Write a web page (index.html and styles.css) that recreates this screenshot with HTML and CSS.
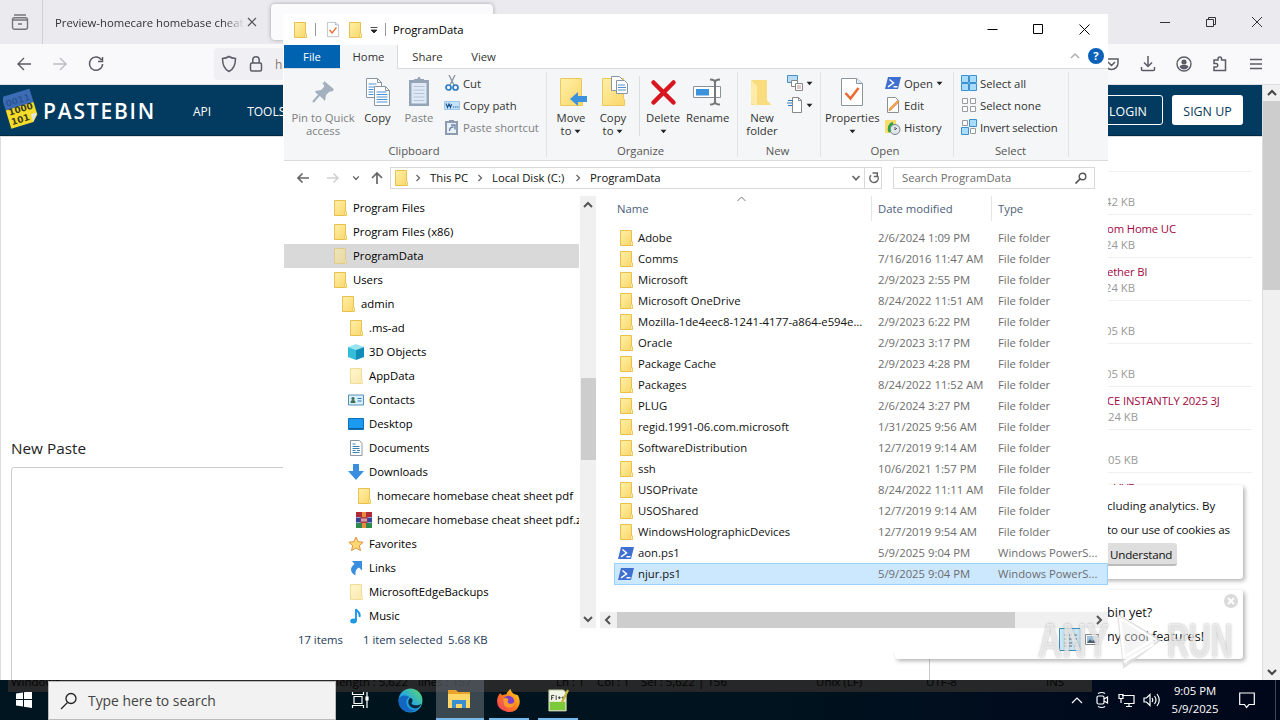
FILE: index.html
```html
<!DOCTYPE html>
<html lang="en">
<head>
    <meta charset="UTF-8">
    <title>ProgramData</title>
    <link rel="stylesheet" href="styles.css">
</head>
<body>
    <!-- shared icons -->
    <svg class="defs" width="0" height="0">
        <linearGradient id="g-folder" x1="0" y1="0" x2="1" y2="1"><stop offset="0" stop-color="#fff0a8"/><stop offset="1" stop-color="#f9d668"/></linearGradient>
        <linearGradient id="g-edge" x1="0" y1="1" x2="1" y2="0"><stop offset="0" stop-color="#0f6fc4"/><stop offset=".45" stop-color="#22a9e6"/><stop offset="1" stop-color="#66d860"/></linearGradient>
        <linearGradient id="g-fox" x1="0" y1="1" x2="1" y2="0"><stop offset="0" stop-color="#f5336b"/><stop offset=".5" stop-color="#ff7a1c"/><stop offset="1" stop-color="#ffe226"/></linearGradient>
        <symbol id="folder" viewBox="0 0 16 16"><path d="M2.500.5h11v11l1 .5v3.500h-12z" fill="url(#g-folder)" stroke="#e8c04e"/><path d="M12.500 15.500v-3l1-1.500 1 1.500v3z" fill="#ffeeb0" stroke="#e8c04e" stroke-width=".7"/></symbol>
        <symbol id="ps" viewBox="0 0 16 16"><path d="M3 2h13l-3 12H0z" fill="#3f6fd1"/><path d="M4.500 4.500l4 3.500-5.500 3.800M8.500 11.800h4" fill="none" stroke="#fff" stroke-width="1.500"/></symbol>
        <symbol id="chev-r" viewBox="0 0 8 8"><path d="M2.500 1l3 3-3 3" fill="none" stroke="#666" stroke-width="1.300"/></symbol>
        <symbol id="chev-d" viewBox="0 0 10 10"><path d="M1.500 3L5 6.800 8.500 3" fill="none" stroke="#666" stroke-width="1.700"/></symbol>
        <symbol id="caret" viewBox="0 0 6 4"><path d="M.5.5h5L3 3.500z" fill="#222"/></symbol>
        <symbol id="check-doc" viewBox="0 0 26 32"><path d="M2.500 2.500h15l6 5v22h-21z" fill="#fff" stroke="#8d959c"/><path d="M17.500 2.500v5h6" fill="#d5eafa" stroke="#8d959c"/><path d="M6.500 17l5 5.500 8-10.500" fill="none" stroke="#ee6a34" stroke-width="2.600"/></symbol>
    </svg>

    <div class="desktop">
        <div class="browser">
            <div class="tabbar">
                <div class="archive"><svg width="18" height="18" viewBox="0 0 18 18" fill="none" stroke="#77767d" stroke-width="1.400"><rect x="1.500" y="4.700" width="15" height="11.600" rx="2"/><path d="M3 2h12M1.500 7h15M7 11h4"/></svg></div>
                <div class="tab">Preview-homecare homebase cheat</div>
                <svg class="tab-x" width="10" height="10" viewBox="0 0 10 10"><path d="M1 1l8 8M9 1L1 9" stroke="#555" stroke-width="1.200"/></svg>
                <div class="tab-active"></div>
                <div class="win-buttons">
                    <svg width="12" height="12" viewBox="0 0 12 12"><path d="M1 6.500h10" stroke="#333"/></svg>
                    <svg width="12" height="12" viewBox="0 0 12 12" fill="none" stroke="#333"><path d="M1.500 3.500h7v7h-7zM3.500 3.500v-2h7v7h-2"/></svg>
                    <svg width="12" height="12" viewBox="0 0 12 12"><path d="M1 1l10 10M11 1L1 11" stroke="#333"/></svg>
                </div>
            </div>
            <div class="toolbar">
                <svg width="16" height="16" viewBox="0 0 16 16" fill="none" stroke="#5b5b66" stroke-width="1.400"><path d="M15 8H1.500M8 2L2 8l6 6"/></svg>
                <svg width="16" height="16" viewBox="0 0 16 16" fill="none" stroke="#bdbcc4" stroke-width="1.400"><path d="M1 8h13.500M8 2l6 6-6 6"/></svg>
                <svg class="reload" width="18" height="18" viewBox="0 0 18 18" fill="none" stroke="#5b5b66" stroke-width="1.500"><path d="M14.500 5A6.600 6.600 0 1 0 15.600 9M15.500 2v4.500H11"/></svg>
                <div class="urlbar">
                    <svg width="16" height="18" viewBox="0 0 16 18" fill="none" stroke="#5b5b66" stroke-width="1.500"><path d="M8 1.500c2 1.300 4 1.800 6.500 2C14.500 9 13 14 8 16.500 3 14 1.500 9 1.500 3.500 4 3.300 6 2.800 8 1.500z"/></svg>
                    <svg width="14" height="18" viewBox="0 0 14 18" fill="none" stroke="#5b5b66" stroke-width="1.500"><rect x="1.500" y="8" width="11" height="8" rx="1.500"/><path d="M3.800 8V5a3.200 3.200 0 0 1 6.400 0v3"/></svg>
                    <span>h</span>
                </div>
                <div class="tools">
                    <svg width="16" height="16" viewBox="0 0 16 16" fill="none" stroke="#5b5b66" stroke-width="1.500"><path d="M1 3h13v4a6.500 6.500 0 0 1-13 0zM4 6l3.500 3.500L11 6"/></svg>
                    <svg width="16" height="16" viewBox="0 0 16 16" fill="none" stroke="#5b5b66" stroke-width="1.500"><path d="M8 0v10M4 6.500l4 4 4-4M1.500 11v2.500q0 1 1 1h11q1 0 1-1V11"/></svg>
                    <svg width="16" height="16" viewBox="0 0 16 16"><circle cx="8" cy="8" r="7" fill="none" stroke="#5b5b66" stroke-width="1.400"/><circle cx="8" cy="6" r="2.600" fill="#5b5b66"/><path d="M3.500 11q.5-2 2.500-2h4q2 0 2.500 2-2 2.500-4.500 2.500T3.500 11z" fill="#5b5b66"/></svg>
                    <svg width="16" height="16" viewBox="0 0 16 16" fill="none" stroke="#5b5b66" stroke-width="1.500"><path d="M2 14.500V11h2a1.700 1.700 0 0 0 0-3.500H2V4h4V2.800a1.800 1.800 0 0 1 3.600 0V4h3.900v10.500z"/></svg>
                    <svg width="16" height="16" viewBox="0 0 16 16" fill="none" stroke="#5b5b66" stroke-width="1.400"><path d="M2 3.500h12M2 8h12M2 12.500h12"/></svg>
                </div>
            </div>
            <div class="view">
                <div class="page">
                    <div class="site-header">
                        <svg class="logo" width="36" height="40" viewBox="0 0 36 40"><g transform="rotate(-17 18 20)"><path d="M3 3h29v14H3z" fill="#3b6cb5"/><path d="M3 17h29v13l-6 6H3z" fill="#f6dc2a"/><path d="M32 28l-6 8v-8z" fill="#dfe6ea"/></g><g transform="rotate(-17 18 20)" class="logo-digits"><text x="5" y="14" fill="#2c5596">0011</text><text x="5" y="23">1000</text><text x="5" y="33">101</text></g></svg>
                        <span class="brand">PASTEBIN</span>
                        <span class="menu">API</span>
                        <span class="menu menu-tools">TOOLS</span>
                        <span class="login">LOGIN</span>
                        <span class="signup">SIGN UP</span>
                    </div>
                    <div class="content">
                        <div class="editor">
                            <h2>New Paste</h2>
                            <div class="paste-area"></div>
                        </div>
                        <ul class="recent">
                            <li></li>
                            <li><small>42 KB</small></li>
                            <li><a>om Home UC</a><small>24 KB</small></li>
                            <li><a>ether Bl</a><small>24 KB</small></li>
                            <li><small>05 KB</small></li>
                            <li><small>05 KB</small></li>
                            <li><a>CE INSTANTLY 2025 3J</a><small>.24 KB</small></li>
                            <li><small>.05 KB</small></li>
                            <li><a>LIVE</a></li>
                        </ul>
                    </div>
                </div>
                <div class="page-scroll">
                    <svg width="10" height="10" viewBox="0 0 10 10"><path d="M1 7l4-4 4 4" fill="none" stroke="#444" stroke-width="2"/></svg>
                    <div class="page-thumb"></div>
                    <svg width="10" height="10" viewBox="0 0 10 10"><path d="M1 3l4 4 4-4" fill="none" stroke="#444" stroke-width="2"/></svg>
                </div>
            </div>
            <div class="notice notice-cookies">
                <p>cluding analytics. By</p>
                <p class="tight">to our use of cookies as</p>
                <span class="understand">Understand</span>
            </div>
            <div class="notice notice-join">
                <p>bin yet?</p>
                <p>ny cool features!</p>
                <svg class="notice-x" width="14" height="14" viewBox="0 0 14 14"><circle cx="7" cy="7" r="7" fill="#dadada"/><path d="M4 4l6 6M10 4l-6 6" stroke="#fff" stroke-width="2"/></svg>
            </div>
        </div>

        <div class="explorer">
            <div class="titlebar">
                <svg width="16" height="16"><use href="#folder"/></svg>
                <i class="bar"></i>
                <svg class="t-check" width="14" height="17"><use href="#check-doc"/></svg>
                <svg class="t-folder" width="16" height="16"><use href="#folder"/></svg>
                <svg class="t-more" width="8" height="8" viewBox="0 0 8 8"><path d="M.5 1.500h7M1 4h6L4 7z" stroke="#222" fill="#222" stroke-width=".8"/></svg>
                <i class="bar"></i>
                <span>ProgramData</span>
                <div class="x-buttons">
                    <svg width="11" height="11" viewBox="0 0 11 11"><path d="M.5 5.500h10" stroke="#000"/></svg>
                    <svg width="11" height="11" viewBox="0 0 11 11"><path d="M.5.5h9v9h-9z" stroke="#000" fill="none"/></svg>
                    <svg width="11" height="11" viewBox="0 0 11 11"><path d="M.5.5l10 10M10.500.5l-10 10" stroke="#000"/></svg>
                </div>
            </div>
            <div class="ribbon-tabs">
                <span class="rt rt-file">File</span>
                <span class="rt rt-home">Home</span>
                <span class="rt rt-share">Share</span>
                <span class="rt">View</span>
                <svg class="collapse" width="10" height="10" viewBox="0 0 10 10"><path d="M1 7l4-4 4 4" fill="none" stroke="#aaa" stroke-width="1.400"/></svg>
                <span class="help">?</span>
            </div>

            <div class="ribbon">
                <div class="group g-clipboard">
                    <div class="tools-row">
                        <div class="big dim w78"><svg width="32" height="32" viewBox="0 0 32 32"><path d="M6 26l7-8" stroke="#a3b0be" stroke-width="2"/><path d="M17 8l8 7-3 1-3 3-1 6-4-4-5-4-1-2 6-1 3-3z" fill="#a3b0be"/><path d="M16.500 6.500l9.500 8" stroke="#a3b0be" stroke-width="3"/></svg>Pin to Quick<br>access</div>
                        <div class="big w31"><svg width="32" height="32" viewBox="0 0 32 32"><g fill="#fff" stroke="#8796a5"><path d="M4.500 2.500h11l4 4v15h-15z"/><path d="M12.500 10.500h11l4 4v15h-15z"/></g><path d="M15.500 2.500v4h4M23.500 10.500v4h4" fill="none" stroke="#8796a5"/><path d="M6.500 8h8M6.500 11h6M6.500 13.500h5M6.500 16h5M6.500 18.500h5M14.500 16h10M14.500 18.500h11M14.500 21h11M14.500 23.500h11M14.500 26h11" stroke="#4f90d2"/></svg>Copy</div>
                        <div class="big dim w52"><svg width="32" height="32" viewBox="0 0 32 32"><path d="M6 4h20v26H6z" fill="#95a3b6"/><path d="M8.500 7h15v20.500h-15z" fill="#dfe9f5"/><path d="M10.500 10.500h11M10.500 14h11M10.500 17.500h11M10.500 21h11M10.500 24.500h11" stroke="#b3c4d8"/><path d="M11 3h3l2-2.500L18 3h3v4H11z" fill="#95a3b6"/></svg>Paste</div>
                        <div class="smalls">
                            <div><svg width="16" height="16" viewBox="0 0 16 16"><path d="M5 0l5 10M11 0L6 10" stroke="#8a939b" stroke-width="1.300"/><g fill="none" stroke="#2b7cc4" stroke-width="1.700"><circle cx="4.500" cy="12.500" r="2.500"/><circle cx="11.500" cy="12.500" r="2.500"/></g></svg>Cut</div>
                            <div><svg width="16" height="16" viewBox="0 0 16 16"><path d="M.5 4.500h15v8H.5z" fill="#c4e2fa" stroke="#9cc7ea"/><path d="M2 6.500l1.500 4L5 7l1.500 3.500L7.500 7M9 10h1.200M11.200 10h1.200M13.200 10h1.200" fill="none" stroke="#17518c" stroke-width="1.100"/></svg>Copy path</div>
                            <div class="dim"><svg width="16" height="16" viewBox="0 0 16 16"><path d="M1 2h13v14H1z" fill="#8d9cb3"/><path d="M3 4h9v10H3z" fill="#eaf0f7"/><path d="M5 1h5v2.500H5z" fill="#8d9cb3"/><path d="M5.500 12c0-3 1-4 4-4M7 6h4v4.500" fill="none" stroke="#6c83a6" stroke-width="1.400"/></svg>Paste shortcut</div>
                        </div>
                    </div>
                    <div class="group-name">Clipboard</div>
                </div>
                <div class="group g-organize">
                    <div class="tools-row">
                        <div class="big w42"><svg width="32" height="32" viewBox="0 0 32 32"><path d="M5.500 2.500h21v20l1 1v6h-22z" fill="url(#g-folder)" stroke="#eec85a"/><path d="M15 23l8-7v4h9v6h-9v4z" fill="#3c92dc"/></svg>Move<br>to <svg class="c" width="7" height="5"><use href="#caret"/></svg></div>
                        <div class="big w42"><svg width="32" height="32" viewBox="0 0 32 32"><path d="M5.500 2.500h21v20l1 1v6h-22z" fill="url(#g-folder)" stroke="#eec85a"/><g fill="#fff" stroke="#8796a5"><path d="M14.500.5h8l3 3v11h-11z"/><path d="M19.500 4.500h8l3 3v10h-11z"/></g><path d="M21 9h7M21 11.500h8M21 14h8" stroke="#4f90d2"/></svg>Copy<br>to <svg class="c" width="7" height="5"><use href="#caret"/></svg></div>
                        <i class="inner-sep"></i>
                        <div class="big w46"><svg width="32" height="32" viewBox="0 0 32 32"><path d="M6.500 6.500l20 20M26.500 6.500l-20 20" stroke="#d8161f" stroke-width="4.500" stroke-linecap="round"/></svg>Delete<br><svg class="c" width="7" height="5"><use href="#caret"/></svg></div>
                        <div class="big w42"><svg width="32" height="32" viewBox="0 0 32 32"><path d="M2.500 10.500h27v11h-27z" fill="#fff" stroke="#8a9299"/><path d="M5 13h13v6.500H5z" fill="#3c92dc"/><path d="M19 3.500q5 0 5 3 0-3 5-3M24 6v21M19 28.500q5 0 5-3 0 3 5 3" fill="none" stroke="#777" stroke-width="2"/></svg>Rename</div>
                    </div>
                    <div class="group-name">Organize</div>
                </div>
                <div class="group g-new">
                    <div class="tools-row">
                        <div class="big w42"><svg width="32" height="32" viewBox="0 0 32 32"><path d="M5 4h16v20l4 5H5z" fill="#f9dc7e"/><path d="M5 4l6 6v20l-6-3z" fill="#fdeba8"/></svg>New<br>folder</div>
                        <div class="smalls">
                            <div><svg width="16" height="16" viewBox="0 0 16 16" fill="#fff"><path d="M.5.5h10v7H.5z" fill="#b9dcf6" stroke="#4b8fc5"/><path d="M4.500 5.500h6v6h-6z" stroke="#888"/><path d="M8.500 8.500h7v7h-7z" stroke="#888"/><path d="M10 11h4M10 13h4" stroke="#c98f8f"/></svg><svg width="7" height="5"><use href="#caret"/></svg></div>
                            <div><svg width="16" height="16" viewBox="0 0 16 16"><path d="M5.500.5h6l3 3v12h-9z" fill="#fff" stroke="#888"/><path d="M11.500.5v3h3" fill="none" stroke="#888"/><path d="M1 3.500h5M0 6h5M1 8.500h4" stroke="#3478c0" stroke-width="1.200"/></svg><svg width="7" height="5"><use href="#caret"/></svg></div>
                        </div>
                    </div>
                    <div class="group-name">New</div>
                </div>
                <div class="group g-open">
                    <div class="tools-row">
                        <div class="big w54"><svg width="26" height="32"><use href="#check-doc"/></svg>Properties<br><svg class="c" width="7" height="5"><use href="#caret"/></svg></div>
                        <div class="smalls">
                            <div><svg width="16" height="16"><use href="#ps"/></svg>Open <svg width="7" height="5"><use href="#caret"/></svg></div>
                            <div><svg width="16" height="16" viewBox="0 0 16 16"><path d="M2.500.5h8l3 3v12h-11z" fill="#fff" stroke="#8a8f94"/><path d="M4 14l2-1 8-8-1.500-1.500-8 8z" fill="#f3a651" stroke="#d58032" stroke-width=".6"/></svg>Edit</div>
                            <div><svg width="16" height="16" viewBox="0 0 16 16"><path d="M0 1h11v13H0z" fill="#f8dc6e"/><circle cx="10" cy="10.500" r="5" fill="#dfe5e9" stroke="#77828a"/><path d="M10 8v3l2-2" fill="none" stroke="#555"/><path d="M8 4a6 6 0 0 0-3 9" fill="none" stroke="#2ba14b" stroke-width="2.500"/></svg>History</div>
                        </div>
                    </div>
                    <div class="group-name">Open</div>
                </div>
                <div class="group g-select">
                    <div class="tools-row">
                        <div class="smalls">
                            <div><svg width="16" height="16" viewBox="0 0 16 16" fill="#a9dbfb" stroke="#3c92d0"><path d="M.5.5h7v7h-7zM8.500.5h7v7h-7zM.5 8.500h7v7h-7zM8.500 8.500h7v7h-7z"/></svg>Select all</div>
                            <div><svg width="16" height="16" viewBox="0 0 16 16" fill="#fff" stroke="#9a9a9a"><path d="M1.500 1.500h5v5h-5zM9.500 1.500h5v5h-5zM1.500 9.500h5v5h-5zM9.500 9.500h5v5h-5z"/></svg>Select none</div>
                            <div class="tight"><svg width="16" height="16" viewBox="0 0 16 16"><path d="M1.500 1.500h5v5h-5zM9.500 9.500h5v5h-5z" fill="#fff" stroke="#9a9a9a"/><path d="M8.500.5h7v7h-7zM.5 8.500h7v7h-7z" fill="#a9dbfb" stroke="#3c92d0"/></svg>Invert selection</div>
                        </div>
                    </div>
                    <div class="group-name">Select</div>
                </div>
            </div>

            <div class="address-row">
                <svg class="nav-back" width="14" height="12" viewBox="0 0 14 12"><path d="M13 6H2M6.500 1.500L2 6l4.500 4.500" fill="none" stroke="#666" stroke-width="1.700"/></svg>
                <svg class="nav-fwd" width="14" height="12" viewBox="0 0 14 12"><path d="M1 6h11M7.500 1.500L12 6l-4.500 4.500" fill="none" stroke="#d0d0d0" stroke-width="1.500"/></svg>
                <svg class="nav-recent" width="8" height="8"><use href="#chev-d"/></svg>
                <svg class="nav-up" width="12" height="14" viewBox="0 0 12 14"><path d="M6 13V2M1 7l5-5 5 5" fill="none" stroke="#666" stroke-width="1.700"/></svg>
                <div class="crumbs">
                    <svg width="16" height="16"><use href="#folder"/></svg>
                    <svg class="sep1" width="8" height="8"><use href="#chev-r"/></svg>
                    <span class="crumb c1">This PC</span>
                    <svg width="8" height="8"><use href="#chev-r"/></svg>
                    <span class="crumb c2">Local Disk (C:)</span>
                    <svg width="8" height="8"><use href="#chev-r"/></svg>
                    <span class="crumb">ProgramData</span>
                    <svg class="drop" width="10" height="10"><use href="#chev-d"/></svg>
                    <div class="refresh"><svg width="12" height="12" viewBox="0 0 12 12"><path d="M3 3.300a4.200 4.200 0 1 0 6.200.2M4.500 1H9.300v3.600H5.800" fill="none" stroke="#666" stroke-width="1.500"/></svg></div>
                </div>
                <div class="search"><span>Search ProgramData</span><svg width="12" height="12" viewBox="0 0 12 12"><circle cx="7.500" cy="4.500" r="3.300" fill="none" stroke="#555" stroke-width="1.400"/><path d="M5 7l-4.500 4.500" stroke="#555" stroke-width="1.700"/></svg></div>
            </div>

            <div class="panes">
                <div class="tree">
                    <div class="node l0"><svg><use href="#folder"/></svg>Program Files</div>
                    <div class="node l0"><svg><use href="#folder"/></svg>Program Files (x86)</div>
                    <div class="node l0 current"><svg class="faded"><use href="#folder"/></svg>ProgramData</div>
                    <div class="node l0"><svg><use href="#folder"/></svg>Users</div>
                    <div class="node l1"><svg><use href="#folder"/></svg>admin</div>
                    <div class="node l2"><svg><use href="#folder"/></svg>.ms-ad</div>
                    <div class="node l2"><svg viewBox="0 0 16 16"><path d="M0 3l8-3 8 3-8 3z" fill="#9be5f2"/><path d="M0 3l8 3v10l-8-3z" fill="#35bcd8"/><path d="M8 6l8-3v10l-8 3z" fill="#128cb8"/></svg>3D Objects</div>
                    <div class="node l2"><svg class="faded"><use href="#folder"/></svg>AppData</div>
                    <div class="node l2"><svg viewBox="0 0 16 16"><path d="M.5 3h15v10H.5z" fill="#d8effc" stroke="#5a8fb5"/><circle cx="5" cy="6.500" r="1.600" fill="#3d6d52"/><path d="M2.500 11q0-3 2.500-3t2.500 3z" fill="#3d6d52"/><path d="M9.500 6.500h4M9.500 9h4" stroke="#2c79bb"/></svg>Contacts</div>
                    <div class="node l2"><svg viewBox="0 0 16 16"><path d="M.5 2.500h15v11H.5z" fill="#1a9af0" stroke="#0e6fb6"/><path d="M1 12.500h14" stroke="#0d5fa0"/></svg>Desktop</div>
                    <div class="node l2"><svg viewBox="0 0 16 16"><path d="M2.500.5h9l2.500 3v12H2.500z" fill="#fff" stroke="#8a98a5"/><path d="M4.500 4h3M4.500 6.500h7M4.500 8.500h7M4.500 10.500h3M9 10.500h3M4.500 12.500h7" stroke="#3c7fb0"/></svg>Documents</div>
                    <div class="node l2"><svg viewBox="0 0 16 16"><path d="M5 0h6v7h5l-8 9-8-9h5z" fill="#3a8ede"/></svg>Downloads</div>
                    <div class="node l3"><svg><use href="#folder"/></svg>homecare homebase cheat sheet pdf</div>
                    <div class="node l3"><svg viewBox="0 0 16 16"><path d="M0 0h16v5H0z" fill="#b02a37"/><path d="M0 5.500h16v5H0z" fill="#33449c"/><path d="M0 11h16v5H0z" fill="#2c8a4d"/><path d="M6 0h4v16H6z" fill="#e88b3c"/><path d="M4.500 5h7v6h-7z" fill="#a93c4c"/><path d="M6 6.500v3M8 6.500v3M10 6.500v3" stroke="#fff"/></svg>homecare homebase cheat sheet pdf.z</div>
                    <div class="node l2"><svg viewBox="0 0 16 16"><path d="M8 1l2.100 4.700 5.100.5-3.900 3.400 1.200 5L8 12l-4.500 2.600 1.200-5L.8 6.200l5.100-.5z" fill="#ffd874" stroke="#dd9440"/></svg>Favorites</div>
                    <div class="node l2"><svg viewBox="0 0 16 16"><path d="M4 1h10v9.500l-3-3c-3 1.500-4 4-3.500 8C2 12.500 1.500 8 6.500 4z" fill="#3a8ede"/></svg>Links</div>
                    <div class="node l2"><svg class="faded"><use href="#folder"/></svg>MicrosoftEdgeBackups</div>
                    <div class="node l2"><svg viewBox="0 0 16 16"><ellipse cx="5.500" cy="13" rx="3.300" ry="2.500" fill="#1f97e4"/><path d="M8 13V1c1 3 5 3 3.500 8" fill="none" stroke="#1f97e4" stroke-width="1.900"/></svg>Music</div>
                </div>
                <div class="vscroll">
                    <svg width="10" height="10" viewBox="0 0 10 10"><path d="M1 7l4-4 4 4" fill="none" stroke="#555" stroke-width="2"/></svg>
                    <div class="vthumb"></div>
                    <svg width="10" height="10" viewBox="0 0 10 10"><path d="M1 3l4 4 4-4" fill="none" stroke="#555" stroke-width="2"/></svg>
                </div>
                <div class="list">
                    <div class="cols">
                        <span class="col-name">Name</span><span class="col-date">Date modified</span><span class="col-type">Type</span>
                        <svg class="sort" width="9" height="6" viewBox="0 0 9 6"><path d="M.5 5l4-4 4 4" fill="none" stroke="#777"/></svg>
                    </div>
                    <div class="rows">
                        <div class="row"><svg><use href="#folder"/></svg><b>Adobe</b><span>2/6/2024 1:09 PM</span><em>File folder</em></div>
                        <div class="row"><svg><use href="#folder"/></svg><b>Comms</b><span>7/16/2016 11:47 AM</span><em>File folder</em></div>
                        <div class="row"><svg><use href="#folder"/></svg><b>Microsoft</b><span>2/9/2023 2:55 PM</span><em>File folder</em></div>
                        <div class="row"><svg><use href="#folder"/></svg><b>Microsoft OneDrive</b><span>8/24/2022 11:51 AM</span><em>File folder</em></div>
                        <div class="row"><svg><use href="#folder"/></svg><b>Mozilla-1de4eec8-1241-4177-a864-e594e...</b><span>2/9/2023 6:22 PM</span><em>File folder</em></div>
                        <div class="row"><svg><use href="#folder"/></svg><b>Oracle</b><span>2/9/2023 3:17 PM</span><em>File folder</em></div>
                        <div class="row"><svg><use href="#folder"/></svg><b>Package Cache</b><span>2/9/2023 4:28 PM</span><em>File folder</em></div>
                        <div class="row"><svg><use href="#folder"/></svg><b>Packages</b><span>8/24/2022 11:52 AM</span><em>File folder</em></div>
                        <div class="row"><svg><use href="#folder"/></svg><b>PLUG</b><span>2/6/2024 3:27 PM</span><em>File folder</em></div>
                        <div class="row"><svg><use href="#folder"/></svg><b>regid.1991-06.com.microsoft</b><span>1/31/2025 9:56 AM</span><em>File folder</em></div>
                        <div class="row"><svg><use href="#folder"/></svg><b>SoftwareDistribution</b><span>12/7/2019 9:14 AM</span><em>File folder</em></div>
                        <div class="row"><svg><use href="#folder"/></svg><b>ssh</b><span>10/6/2021 1:57 PM</span><em>File folder</em></div>
                        <div class="row"><svg><use href="#folder"/></svg><b>USOPrivate</b><span>8/24/2022 11:11 AM</span><em>File folder</em></div>
                        <div class="row"><svg><use href="#folder"/></svg><b>USOShared</b><span>12/7/2019 9:14 AM</span><em>File folder</em></div>
                        <div class="row"><svg><use href="#folder"/></svg><b>WindowsHolographicDevices</b><span>12/7/2019 9:54 AM</span><em>File folder</em></div>
                        <div class="row"><svg><use href="#ps"/></svg><b>aon.ps1</b><span>5/9/2025 9:04 PM</span><em>Windows PowerS...</em></div>
                        <div class="row selected"><svg><use href="#ps"/></svg><b>njur.ps1</b><span>5/9/2025 9:04 PM</span><em>Windows PowerS...</em></div>
                    </div>
                    <div class="hscroll">
                        <svg width="17" height="10" viewBox="0 0 17 10"><path d="M10 1L6 5l4 4" fill="none" stroke="#555" stroke-width="2"/></svg>
                        <div class="hthumb"></div>
                        <svg width="17" height="10" viewBox="0 0 17 10"><path d="M6 1l4 4-4 4" fill="none" stroke="#555" stroke-width="2"/></svg>
                    </div>
                </div>
            </div>
            <div class="status">
                <span class="s1">17 items</span><span class="s2">1 item selected</span><span>5.68 KB</span>
                <div class="view-modes">
                    <svg width="22" height="23" viewBox="0 0 22 23"><path d="M.5.5h21v22H.5z" fill="#cbe8f6" stroke="#3c8fb8"/><path d="M5 7h3M5 11h3M5 15h3M5 18h3M10 7h3M10 11h3M10 15h3M10 18h3M15 7h3M15 11h3M15 15h3M15 18h3" stroke="#666"/></svg>
                    <svg width="14" height="11" viewBox="0 0 14 11"><path d="M.5.5h13v10H.5z" fill="#fff" stroke="#888"/><path d="M2 2h10v7H2z" fill="#9fc3de"/><path d="M2 9l3-4 2 2 2-1 3 3z" fill="#4a5f70"/></svg>
                </div>
            </div>
        </div>

        <div class="watermark"><span>ANY</span><svg width="54" height="58" viewBox="0 0 54 58"><path d="M8 3l42 25L14 55z" fill="#e6e6e6" fill-opacity=".45" stroke="#d9d9d9" stroke-opacity=".8" stroke-width="2"/><path d="M10 6l34 21-30 18zM14 50l30-18" fill="none" stroke="#fff" stroke-width="2.500"/></svg><span>RUN</span></div>

        <div class="taskbar">
            <div class="ghost"><span class="gh1">Windows</span><span class="gh2">length : 5,622</span><span class="gh3">lines : 157</span><span class="gh4">Ln : 1</span><span class="gh5">Col : 1</span><span class="gh6">Sel : 5,622 | 156</span><span class="gh7">Unix (LF)</span><span class="gh8">UTF-8</span><span class="gh9">INS</span></div>
            <div class="start"><svg width="16" height="17" viewBox="0 0 16 17" fill="#fff"><path d="M0 2.500l7-1V8H0zM8 1.300L16 0v8H8zM0 9h7v6.500l-7-1zM8 9h8v8l-8-1.300z"/></svg></div>
            <div class="task-search"><svg width="18" height="18" viewBox="0 0 18 18" fill="none" stroke="#222" stroke-width="1.300"><circle cx="11" cy="6.500" r="5"/><path d="M7.500 10.500L1 17"/></svg>Type here to search</div>
            <div class="app w48"><svg width="18" height="18" viewBox="0 0 18 18" fill="none" stroke="#fff" stroke-width="1.200"><path d="M3 5.500h8v7H3zM1.500 1v2.500h11V1M1.500 17v-2.500h11V17M16 1v16"/><path d="M15 6h2v3h-2z" fill="#fff"/></svg></div>
            <div class="app w52"><svg width="25" height="25" viewBox="0 0 24 24"><circle cx="12" cy="12" r="11.500" fill="url(#g-edge)"/><path d="M.5 12C1 7 8 6 11 9c-4 1-4 8 0 11 3 2 7 1 9-1-5 6-19 6-19.500-7z" fill="#1467c0"/><path d="M11.500 9.500c3 0 3 3 1.500 5 0 2.500 6 3 9.500.5-1 2-2 3.500-4 4.500-7 1-11-6-7-10z" fill="#07283f"/></svg></div>
            <div class="app w48 active"><svg width="24" height="22" viewBox="0 0 24 22"><path d="M1 2h8l2 2h12v16H1z" fill="#e9a32b"/><path d="M1 6h22v14H1z" fill="#ffd766"/><path d="M5 20v-8h14v8h-4v-4H9v4z" fill="#3a8fd0"/></svg></div>
            <div class="app w49 run"><svg width="25" height="25" viewBox="0 0 24 24"><path d="M4 5l2 2q2-1 4-1 1-3 4-5 1 4 4 5l3 1q3 5 1 10-3 7-11 6Q1 21 1 13q0-5 3-8z" fill="url(#g-fox)"/><circle cx="12" cy="13" r="5.500" fill="#7b3fc8"/><path d="M7 10q3-1 5 1-2 3 1 4 4 1 5-3 0 7-6 7-6-1-5-9z" fill="#ff9a2c"/></svg></div>
            <div class="app w49 run"><svg width="22" height="26" viewBox="0 0 24 26"><path d="M2 2h16l3 3v20H2z" fill="#f1f5e6" stroke="#a5b58b"/><path d="M3 15h17v9H3z" fill="#7cc93a"/><path d="M5 13V8h3M5 10.500h2M10 8v5M12 10.500h3M13.500 9v3M16 10.500h3M17.500 9v3" fill="none" stroke="#333"/><path d="M23 2l-7 14" stroke="#c4b43e" stroke-width="2.500"/></svg></div>
            <div class="tray">
                <svg width="12" height="8" viewBox="0 0 12 8"><path d="M1 7l5-5 5 5" fill="none" stroke="#fff" stroke-width="1.200"/></svg>
                <svg class="meet" width="13" height="18" viewBox="0 0 13 18" fill="none" stroke="#fff" stroke-width="1.200"><rect x="1" y="5" width="7" height="8" rx="1.500"/><path d="M8 8l3.500-2v6L8 10M2 2.500q4-2 7 0M2 15.500q4 2 7 0"/></svg>
                <svg class="net" width="17" height="15" viewBox="0 0 17 15" fill="none" stroke="#fff" stroke-width="1.200"><path d="M4 2.500h12v8H6M1 1.500h4v4H1zM3 5.500V10M8 13.500h6M11 10.500v3"/></svg>
                <svg class="vol" width="17" height="14" viewBox="0 0 17 14" fill="none" stroke="#fff" stroke-width="1.200"><path d="M1 5h2.500L7 1.500v11L3.500 9H1zM9 5q1.500 2 0 4M11.500 3q3 4 0 8M14 1q4.500 6 0 12"/></svg>
                <div class="clock">9:05 PM<br>5/9/2025</div>
                <svg class="bell" width="16" height="17" viewBox="0 0 16 17"><path d="M.7 1h14.600v11.500H10l-2.500 3-2-3H.7z" fill="none" stroke="#fff" stroke-width="1.200"/></svg>
                <i class="peek"></i>
            </div>
        </div>
    </div>
</body>
</html>
```

FILE: styles.css
```css
body {
    margin: 0;
    font-family: "Open Sans", "Noto Sans", sans-serif;
    font-size: 11.3px;
    color: #111;
}

* {
    box-sizing: border-box;
}

svg {
    flex: none;
}

.defs {
    position: absolute;
}

.desktop {
    position: relative;
    width: 1280px;
    height: 720px;
    overflow: hidden;
    background: #fff;
}

/* browser */
.browser {
    position: absolute;
    left: 0;
    top: 0;
    width: 1280px;
    height: 680px;
    display: flex;
    flex-direction: column;
    overflow: hidden;
}

.tabbar {
    height: 44px;
    flex: none;
    display: flex;
    align-items: center;
    background: #eaeaef;
}

.archive {
    width: 43px;
    height: 44px;
    padding: 13px 0 0 11px;
    border-right: 1px solid #cfcfd6;
}

.tab {
    width: 190px;
    margin-left: 12px;
    color: #333;
    white-space: nowrap;
    -webkit-mask-image: linear-gradient(90deg, #000 168px, transparent);
}

.tab-x {
    margin-left: 2px;
}

.tab-active {
    width: 222px;
    height: 36px;
    margin-left: 14px;
    border-radius: 4px;
    background: #fbfbfd;
    box-shadow: 0 0 4px rgba(0, 0, 0, 0.3);
}

.win-buttons {
    margin-left: auto;
    padding-right: 17px;
    display: flex;
    gap: 34px;
}

.toolbar {
    height: 41px;
    flex: none;
    display: flex;
    align-items: center;
    padding-left: 16px;
    gap: 20px;
    background: #f9f9fb;
    border-bottom: 1px solid #dcdce2;
}

.reload {
    margin-left: -1px;
}

.urlbar {
    width: 560px;
    height: 32px;
    margin-left: 89px;
    padding-left: 7px;
    display: flex;
    align-items: center;
    gap: 12px;
    background: #f0f0f4;
    border-radius: 4px;
    font-size: 12px;
    color: #8a7a72;
}

.tools {
    margin-left: auto;
    padding-right: 16px;
    display: flex;
    gap: 20px;
}

.view {
    flex: 1;
    display: flex;
}

.page {
    width: 1263px;
    border-right: 1px solid #ddd;
}

.site-header {
    height: 51px;
    display: flex;
    align-items: center;
    background: #023b5f;
    border-bottom: 1px solid #02293f;
    color: #fff;
}

.logo {
    margin: 0 0 3px 3px;
}

.logo-digits {
    font: bold 9px "DejaVu Sans", sans-serif;
    fill: #3a3d20;
}

.brand {
    width: 116px;
    margin-left: 4px;
    padding-top: 2px;
    font-size: 21px;
    font-weight: 600;
    letter-spacing: 1.8px;
}

.menu {
    margin-left: 34px;
    padding-top: 2px;
    font-size: 12px;
}

.menu-tools {
    margin-left: 36px;
}

.login {
    width: 74px;
    height: 30px;
    margin-left: auto;
    border: 1px solid #fff;
    border-radius: 3px;
    line-height: 32px;
    text-align: center;
    font-size: 12.4px;
    padding-left: 4px;
}

.signup {
    width: 71px;
    height: 30px;
    margin: 0 19px 0 9px;
    border-radius: 3px;
    background: #fff;
    color: #023859;
    line-height: 33px;
    text-align: center;
    font-size: 12.4px;
}

.content {
    height: 544px;
    display: flex;
    border-left: 1px solid #ddd;
    border-top: 1px solid #ddd;
}

.editor {
    width: 929px;
    padding: 301px 0 0 10px;
}

.editor h2 {
    margin: 0;
    height: 29px;
    line-height: 20px;
    font-size: 15.3px;
    font-weight: 500;
    color: #222;
}

.paste-area {
    height: 240px;
    border: 1px solid #ccc;
    border-radius: 3px;
}

.recent {
    width: 144px;
    margin: -8px 0 0 178px;
    padding: 0;
    list-style: none;
}

.recent li {
    display: flex;
    flex-direction: column;
    justify-content: flex-end;
    height: 43px;
    padding-bottom: 4px;
    border-bottom: 1px solid #f0f0f0;
    white-space: nowrap;
}

.recent li:last-child {
    padding: 0 0 21px 6px;
    border-bottom: 0;
}

.recent a {
    font-size: 11.3px;
    line-height: 15px;
    color: #a1073f;
    letter-spacing: -0.15px;
    text-indent: -1px;
}

.recent small {
    font-size: 11.3px;
    line-height: 17px;
    color: #999;
    text-indent: -3px;
}

.page-scroll {
    width: 17px;
    height: 595px;
    display: flex;
    flex-direction: column;
    align-items: center;
    padding: 3px 0;
    background: #f0f0f0;
}

.page-thumb {
    width: 17px;
    height: 189px;
    margin-top: 3px;
    margin-bottom: auto;
    background: #cdcdcd;
}

/* floating notices in the page corner */
.notice {
    position: absolute;
    left: 895px;
    width: 348px;
    padding-left: 212px;
    background: #fff;
    border-radius: 3px;
    box-shadow: 2px 2px 4px rgba(0, 0, 0, 0.3);
    font-size: 11.6px;
    color: #111;
    white-space: nowrap;
}

.notice p {
    margin: 0;
    line-height: 24px;
}

.tight {
    letter-spacing: -0.2px;
}

.notice-cookies {
    top: 485px;
    height: 94px;
    padding-top: 9px;
}

.understand {
    display: block;
    width: 70px;
    height: 23px;
    margin-top: 1px;
    padding-left: 3px;
    line-height: 23px;
    letter-spacing: -0.2px;
    background: #dedede;
    border-bottom: 2px solid #bbb;
    border-radius: 0 3px 3px 0;
}

.notice-join {
    top: 590px;
    height: 69px;
    padding-top: 11px;
    font-size: 12.6px;
}

.notice-x {
    position: absolute;
    right: 5px;
    top: 4px;
}

/* file explorer */
.explorer {
    position: absolute;
    left: 283px;
    top: 14px;
    width: 825px;
    height: 639px;
    display: flex;
    flex-direction: column;
    padding-left: 1px;
    background: #fff;
    overflow: hidden;
}

.titlebar {
    height: 31px;
    display: flex;
    align-items: center;
    padding-left: 8px;
    color: #000;
}

.bar {
    width: 1px;
    height: 13px;
    margin: 0 10px 0 7px;
    background: #999;
}

.t-folder {
    margin-left: 7px;
}

.t-more {
    margin-left: 7px;
}

.t-more + .bar {
    margin: 0 7px 0 7px;
}

.x-buttons {
    display: flex;
    gap: 35px;
    margin-left: auto;
    padding-right: 18px;
}

.ribbon-tabs {
    display: flex;
    height: 24px;
    border-bottom: 1px solid #dadbdc;
}

.rt {
    width: 57px;
    line-height: 24px;
    text-align: center;
    color: #333;
}

.rt-file {
    width: 56px;
    height: 23px;
    background: #0063b1;
    color: #fff;
}

.rt-home {
    width: 58px;
    height: 24px;
    background: #f5f6f7;
    border-right: 1px solid #dadbdc;
}

.rt-share {
    padding-left: 2px;
}

.collapse {
    margin: 6px 8px 0 auto;
}

.help {
    width: 16px;
    height: 16px;
    margin: 3px 4px 0 0;
    border-radius: 50%;
    background: #0a62b8;
    color: #fff;
    font-weight: 700;
    line-height: 16px;
    text-align: center;
}

.ribbon {
    height: 92px;
    display: flex;
    background: #f5f6f7;
    border-bottom: 1px solid #dadbdc;
}

.group {
    margin: 3px 0;
    border-right: 1px solid #e2e3e4;
    display: flex;
    flex-direction: column;
}

.g-clipboard { width: 263px; }
.g-organize { width: 191px; padding-left: 3px; }
.g-new { width: 83px; padding-left: 3px; }
.g-open { width: 133px; padding-left: 4px; }
.g-select { width: 115px; padding-left: 7px; }

.tools-row {
    flex: none;
    height: 71px;
    padding-top: 4px;
    display: flex;
}

.group-name {
    line-height: 16px;
    padding-right: 6px;
    text-align: center;
    color: #555;
}

.g-clipboard .group-name {
    padding-right: 2px;
}

.g-open .group-name,
.g-select .group-name {
    padding-right: 8px;
}

.big {
    line-height: 13px;
    color: #333;
    text-align: center;
    white-space: nowrap;
}

.big > svg:first-child {
    display: block;
    margin: 0 auto 3px;
}

.w31 > svg:first-child {
    margin-left: 0;
}

.big .c {
    vertical-align: 1px;
}

.w31 { width: 31px; }
.w42 { width: 42px; }
.w46 { width: 46px; }
.w48 { width: 48px; }
.w49 { width: 49px; }
.w52 { width: 52px; }
.w54 { width: 54px; }
.w78 { width: 78px; }

.smalls {
    margin-top: -4px;
    color: #333;
    white-space: nowrap;
}

.g-clipboard .smalls {
    margin-left: -1px;
}

.smalls div {
    height: 22px;
    display: flex;
    align-items: center;
    gap: 3px;
}

.big.dim,
.smalls .dim {
    color: #7d7f82;
}

.g-new .smalls {
    margin-left: 4px;
}

.g-open .smalls {
    margin-left: 6px;
}

.inner-sep {
    width: 1px;
    height: 60px;
    margin-left: 5px;
    background: #dcdddf;
}

.address-row {
    height: 35px;
    display: flex;
    align-items: center;
    padding: 0 0 1px 12px;
}

.nav-fwd { margin-left: 16px; }
.nav-recent { margin-left: 12px; }
.nav-up { margin-left: 11px; }

.crumbs {
    width: 492px;
    height: 22px;
    margin-left: 7px;
    padding: 0 0 1px 2px;
    display: flex;
    align-items: center;
    border: 1px solid #d9d9d9;
    color: #111;
}

.sep1 {
    margin: 0 8px 0 5px;
}

.crumb {
    white-space: nowrap;
}

.c1 {
    width: 46px;
}

.c2 {
    width: 82px;
    margin-left: 8px;
}

.c2 + svg {
    margin-right: 8px;
}

.drop {
    margin-left: auto;
    margin-right: 3px;
}

.refresh {
    width: 17px;
    height: 20px;
    margin-bottom: -1px;
    padding: 4px 0 0 3px;
    border-left: 1px solid #d9d9d9;
}

.search {
    width: 202px;
    height: 22px;
    margin-left: 11px;
    padding: 0 7px 1px 8px;
    display: flex;
    align-items: center;
    justify-content: space-between;
    border: 1px solid #d9d9d9;
    color: #6d6d6d;
}

.panes {
    display: flex;
    height: 432px;
}

.tree {
    width: 295px;
    overflow: hidden;
    color: #000;
}

.node {
    height: 24px;
    padding-bottom: 1px;
    display: flex;
    align-items: center;
    gap: 5px;
    white-space: nowrap;
}

.node svg {
    width: 16px;
    height: 16px;
    margin-top: 1px;
}

.faded {
    opacity: 0.55;
}

.current {
    background: #d9d9d9;
}

.l0 { padding-left: 48px; }
.l1 { padding-left: 56px; }
.l2 { padding-left: 64px; }
.l3 { padding-left: 72px; }

.vscroll {
    width: 16px;
    margin-left: 1px;
    padding: 4px 0;
    display: flex;
    flex-direction: column;
    align-items: center;
    background: #f0f0f0;
}

.vthumb {
    width: 15px;
    height: 82px;
    margin: 168px 0 auto;
    background: #cdcdcd;
}

.list {
    width: 508px;
    margin-left: 4px;
    display: flex;
    flex-direction: column;
}

.cols {
    position: relative;
    height: 25px;
    display: flex;
    line-height: 26px;
    color: #4c607a;
}

.col-name {
    width: 272px;
    padding-left: 17px;
    border-right: 1px solid #e5e5e5;
}

.col-date {
    width: 120px;
    padding-left: 6px;
    border-right: 1px solid #e5e5e5;
}

.col-type {
    padding-left: 6px;
}

.sort {
    position: absolute;
    left: 137px;
    top: 0;
}

.rows {
    height: 385px;
    padding: 6px 0 0 14px;
    margin-bottom: 6px;
}

.row {
    height: 21px;
    display: flex;
    align-items: center;
    padding-left: 4px;
    white-space: nowrap;
}

.row svg {
    width: 16px;
    height: 16px;
}

.row b {
    width: 244px;
    padding-left: 4px;
    font-weight: 400;
    color: #111;
}

.row span {
    width: 120px;
    color: #6d6d6d;
}

.row em {
    font-style: normal;
    color: #6d6d6d;
}

.selected {
    height: 22px;
    padding: 0 0 1px 3px;
    background: #cce8ff;
    border: 1px solid #99d1ff;
}

.hscroll {
    height: 16px;
    display: flex;
    align-items: center;
    background: #f0f0f0;
}

.hthumb {
    width: 398px;
    height: 16px;
    margin-right: auto;
    background: #cdcdcd;
}

.status {
    height: 24px;
    display: flex;
    align-items: center;
    padding: 0 0 1px 14px;
    color: #1e395b;
}

.s1 { width: 65px; }
.s2 { width: 85px; }

.view-modes {
    margin-left: auto;
    padding-right: 9px;
    display: flex;
    align-items: center;
    gap: 4px;
}

/* recorder mark over the corner */
.watermark {
    position: absolute;
    left: 1038px;
    top: 612px;
    height: 58px;
    display: flex;
    align-items: center;
    font: bold 48px/58px "Liberation Sans", sans-serif;
    color: rgba(255, 255, 255, 0.65);
    text-shadow: 0 0 3px rgba(120, 120, 120, 0.6);
}

.watermark span {
    width: 72px;
    transform: scaleX(0.7);
    transform-origin: 0 0;
}

.watermark svg + span {
    margin-left: 3px;
    transform: scaleX(0.63);
}

/* taskbar */
.taskbar {
    position: absolute;
    left: 0;
    top: 680px;
    width: 1280px;
    height: 40px;
    display: flex;
    background: linear-gradient(90deg, #00151f, #00131e 60%, #010b1e 85%, #01071a);
}

.ghost {
    position: absolute;
    left: 8px;
    top: 0;
    width: 1084px;
    height: 12px;
    display: flex;
    background: #262728;
    color: #050505;
    line-height: 4px;
    font-size: 11.5px;
    overflow: hidden;
    white-space: nowrap;
}

.gh1 { width: 328px; padding-left: 3px; }
.gh2 { width: 82px; }
.gh3 { width: 138px; }
.gh4 { width: 41px; }
.gh5 { width: 44px; }
.gh6 { width: 175px; }
.gh7 { width: 110px; }
.gh8 { width: 120px; }

.start {
    width: 48px;
    padding: 11px 0 0 16px;
}

.task-search {
    position: relative;
    width: 288px;
    height: 39px;
    margin-top: 1px;
    padding-left: 11px;
    display: flex;
    align-items: center;
    gap: 10px;
    background: #f2f2f2;
    border: 1px solid #bbb;
    font-size: 13.9px;
    color: #444;
}

.app {
    position: relative;
    display: flex;
    align-items: center;
    justify-content: center;
}

.active {
    padding-right: 2px;
    background: rgba(90, 100, 106, 0.65);
    border-bottom: 2px solid #76b9ed;
}

.run {
    background: linear-gradient(#76b9ed, #76b9ed) 5px 38px / 40px 2px no-repeat;
}

.tray {
    margin-left: auto;
    display: flex;
    align-items: center;
    color: #fff;
}

.meet { margin-left: 13px; }
.net { margin-left: 9px; }
.vol { margin-left: 8px; }

.clock {
    width: 62px;
    margin-left: 4px;
    line-height: 18px;
    text-align: center;
    font-size: 11.3px;
}

.bell {
    margin-left: 13px;
}

.peek {
    width: 1px;
    height: 40px;
    margin: 0 4px 0 20px;
    background: #3c4656;
}
```
